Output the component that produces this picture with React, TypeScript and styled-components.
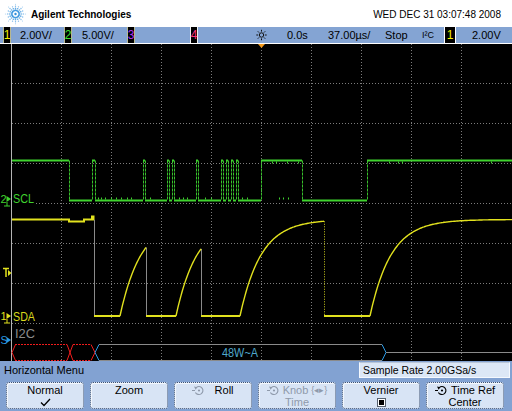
import React from 'react';
import styled, { createGlobalStyle } from 'styled-components';

/* ------------------------------- Global page ------------------------------ */
const GlobalStyle = createGlobalStyle`
  html, body {
    margin: 0;
    padding: 0;
    background: #fff;
  }
  body {
    font-family: "Liberation Sans", Arial, sans-serif;
  }
`;

/* ------------------------------ Scope geometry ----------------------------- */
const TOP = 44;
const BOTTOM = 361;
const LEFT = 11;
const V_GRID = [61, 111, 161, 211, 261, 311, 361, 411, 461];
const H_GRID = [83, 123, 163, 203, 243, 283, 323];

const SCL_HI = 160.5;
const SCL_LO = 200.5;
const SCL_EDGES = [
  69, 92, 95, 143, 145, 167, 169, 172, 174, 196, 198, 221, 223, 226, 228, 231,
  233, 236, 238, 261, 302, 367,
];
const SCL_BUMPS = [
  98, 101, 105, 111, 116, 121, 127, 131, 150, 179, 183, 187, 205, 211, 242, 247,
  279, 283, 288,
];

const SDA_HI = 219.5;
const SDA_LO = 316;

const squareWave = (edges: number[], start: number, end: number) => {
  let high = true;
  let x = start;
  let flats = '';
  let walls = '';
  edges.forEach((e) => {
    flats += `M${x} ${high ? SCL_HI : SCL_LO}H${e}`;
    walls += `M${e + 0.5} ${SCL_HI}V${SCL_LO}`;
    high = !high;
    x = e;
  });
  flats += `M${x} ${high ? SCL_HI : SCL_LO}H${end}`;
  return { flats, walls };
};

const rcY = (t: number, tau = 21) =>
  SDA_LO - (SDA_LO - SDA_HI) * (1 - Math.exp(-t / tau));

const ramp = (x0: number, x1: number) => {
  const pts: string[] = [];
  for (let x = x0; x <= x1; x += 1) {
    pts.push(`${x} ${rcY(x - x0).toFixed(1)}`);
  }
  return pts.join(' L');
};

const scl = squareWave(SCL_EDGES, 12, 512);

const sdaFlats = [
  `M12 ${SDA_HI}H69V221.5H84V${SDA_HI}H92V216.5H93.5V${SDA_HI}H94`,
  `M94 ${SDA_LO}H120`,
  `M146 ${SDA_LO}H176`,
  `M201 ${SDA_LO}H240`,
  `M324 ${SDA_LO}H370`,
].join(' ');

const sdaRamps = [
  `M120 ${SDA_LO} L${ramp(120, 146)}`,
  `M176 ${SDA_LO} L${ramp(176, 201)}`,
  `M240 ${SDA_LO} L${ramp(240, 324)}`,
  `M370 ${SDA_LO} L${ramp(370, 512)}`,
].join(' ');

/* --------------------------------- Layout --------------------------------- */
const Frame = styled.div`
  width: 512px;
  height: 411px;
  display: flex;
  flex-direction: column;
  overflow: hidden;
  background: #000;
  color: #000;
`;

const Header = styled.header`
  height: 27px;
  flex: none;
  background: #fff;
  display: flex;
  align-items: center;
  padding: 0 11px 0 4px;
`;

const Brand = styled.div`
  font-size: 10px;
  font-weight: 700;
  margin-left: 4px;
  margin-top: 1px;
`;

const Clock = styled.div`
  margin-left: auto;
  font-size: 10px;
  margin-top: 2px;
`;

const StatusBar = styled.div`
  height: 16px;
  flex: none;
  background: #84a4d3;
  border-bottom: 1px solid #fff;
  display: flex;
  font-size: 11px;
`;

const Slot = styled.div<{ $w: number; $pad?: number }>`
  width: ${(p) => p.$w}px;
  flex: none;
  padding-left: ${(p) => p.$pad ?? 0}px;
  box-sizing: border-box;
  display: flex;
  align-items: center;
  white-space: nowrap;
`;

const ChanBox = styled.div<{ $c: string; $w?: number; $edge?: string }>`
  width: ${(p) => p.$w ?? 8}px;
  flex: none;
  box-sizing: border-box;
  background: #000;
  color: ${(p) => p.$c};
  border-left: 1px solid ${(p) => p.$edge ?? '#b8b890'};
  border-right: 1px solid ${(p) => p.$edge ?? '#b8b890'};
  display: flex;
  align-items: center;
  justify-content: center;
  font-size: 12px;
`;

const Small = styled.span`
  font-size: 9px;
`;

const Display = styled.svg`
  display: block;
  flex: none;
  font-family: "Liberation Sans", Arial, sans-serif;
`;

const Menu = styled.div`
  height: 50px;
  flex: none;
  background: #82a2d2;
  display: flex;
  flex-direction: column;
`;

const MenuHead = styled.div`
  height: 17px;
  display: flex;
  justify-content: space-between;
  padding: 0 2px 0 4px;
`;

const MenuTitle = styled.div`
  font-size: 11px;
  line-height: 15px;
  padding-top: 2px;
`;

const RateBox = styled.div`
  width: 151px;
  height: 16px;
  margin-top: 1px;
  box-sizing: border-box;
  background: #dce7f6;
  border: 1px solid #f4f8fe;
  border-top-color: #b9c6d8;
  font-size: 10.5px;
  line-height: 14px;
  padding-left: 3px;
`;

const KeyRow = styled.div`
  display: flex;
  gap: 6px;
  padding: 4px 6px 0;
`;

const SoftKey = styled.div<{ $dim?: boolean }>`
  width: 78px;
  height: 27px;
  box-sizing: border-box;
  background: #d8e4f5;
  border: 1px dotted #3f5374;
  border-radius: 3px;
  box-shadow: inset 1px 1px 0 #f3f7fd;
  color: ${(p) => (p.$dim ? '#8f9aab' : '#000')};
  font-size: 11px;
  display: flex;
  flex-direction: column;
  padding-top: 1px;
`;

const KeyLine = styled.div`
  height: 12px;
  line-height: 12px;
  display: flex;
  align-items: center;
  justify-content: center;
  gap: 3px;
  white-space: nowrap;
`;

const CheckBox = styled.div`
  width: 9px;
  height: 9px;
  box-sizing: border-box;
  border: 1px solid #56606e;
  background: #000;
  box-shadow: inset 1px 1px 0 #fff, inset -1px -1px 0 #fff;
`;

/* ---------------------------------- Icons --------------------------------- */
const sparkDots = (() => {
  const dots: { x: number; y: number; r: number; o: number }[] = [];
  for (let i = 0; i < 16; i++) {
    const a = (i * Math.PI) / 8;
    const n = i % 4 === 0 ? 5 : i % 2 === 0 ? 4 : 3;
    for (let k = 1; k <= n; k++) {
      const d = 1.6 + k * 2.05;
      dots.push({
        x: 11.5 + Math.cos(a) * d,
        y: 11 + Math.sin(a) * d,
        r: Math.max(0.45, 1.15 - k * 0.16),
        o: 1 - k * 0.12,
      });
    }
  }
  return dots;
})();

const Spark = () => (
  <svg width="23" height="22" viewBox="0 0 23 22">
    {sparkDots.map((d, i) => (
      <circle key={i} cx={d.x} cy={d.y} r={d.r} fill="#2f8fdc" opacity={d.o} />
    ))}
    <circle cx="11.5" cy="11" r="1.2" fill="#2f8fdc" />
  </svg>
);

const Sun = () => (
  <svg width="11" height="12" viewBox="0 0 11 12">
    <circle cx="5.5" cy="6" r="2.2" fill="none" stroke="#111" strokeWidth="1" />
    {[0, 45, 90, 135, 180, 225, 270, 315].map((a) => {
      const r = (a * Math.PI) / 180;
      return (
        <line
          key={a}
          x1={5.5 + Math.cos(r) * 3.4}
          y1={6 + Math.sin(r) * 3.4}
          x2={5.5 + Math.cos(r) * 5.2}
          y2={6 + Math.sin(r) * 5.2}
          stroke="#111"
          strokeWidth="1"
        />
      );
    })}
  </svg>
);

const Knob = ({ color = '#000' }: { color?: string }) => (
  <svg width="13" height="11" viewBox="0 0 13 11">
    <path
      d="M4.2 2.6 A4 4 0 1 1 3.4 7.4"
      fill="none"
      stroke={color}
      strokeWidth="1.1"
    />
    <path d="M2 1.6 L5.4 2.2 L3.6 4.8 Z" fill={color} />
    <circle cx="7" cy="5.5" r="1.1" fill={color} />
    <line x1="0" y1="5.5" x2="3" y2="5.5" stroke={color} strokeWidth="1" />
  </svg>
);

const Check = () => (
  <svg width="11" height="9" viewBox="0 0 11 9">
    <path d="M1 4.5 L4 7.5 L10 1" fill="none" stroke="#000" strokeWidth="1.3" />
  </svg>
);

/* --------------------------------- Screen --------------------------------- */
const Marker = ({
  y,
  label,
  color,
  ground,
}: {
  y: number;
  label: string;
  color: string;
  ground?: boolean;
}) => (
  <g>
    <text x="0.5" y={y + 4} fontSize="11" fill={color}>
      {label}
    </text>
    <path d={`M6.5 ${y - 3}L11 ${y}L6.5 ${y + 3}Z`} fill={color} />
    {ground && (
      <path
        d={`M7 ${y + 3}V${y + 7}M4 ${y + 7}H10`}
        stroke={color}
        strokeWidth="1"
      />
    )}
  </g>
);

const Screen = () => (
  <Display width={512} height={BOTTOM - TOP} viewBox={`0 ${TOP} 512 ${BOTTOM - TOP}`}>
    <rect x="0" y={TOP} width="512" height={BOTTOM - TOP} fill="#000" />

    {/* graticule */}
    <g stroke="#7c7c7c" strokeWidth="1" strokeDasharray="1 2">
      {V_GRID.map((x) => (
        <line key={x} x1={x + 0.5} y1={TOP} x2={x + 0.5} y2={BOTTOM} />
      ))}
      {H_GRID.map((y) => (
        <line key={y} x1={LEFT + 1} y1={y + 0.5} x2={512} y2={y + 0.5} />
      ))}
    </g>
    <line x1={LEFT + 0.5} y1={TOP} x2={LEFT + 0.5} y2={BOTTOM} stroke="#b4b4b4" />

    {/* trigger position */}
    <path d="M258 44H265L261.5 48Z" fill="#f49a1c" />

    {/* channel 2: SCL */}
    <path d={scl.walls} stroke="#38c02c" strokeWidth="1" strokeDasharray="3 1" fill="none" />
    <path d={scl.flats} stroke="#3fd22e" strokeWidth="2" fill="none" />
    <g fill="#3fd22e">
      {SCL_BUMPS.map((x) => (
        <rect key={x} x={x} y={SCL_LO - 3} width="1" height="2" />
      ))}
      {[272, 276, 287, 298, 389, 398, 402, 491].map((x) => (
        <rect key={x} x={x} y={SCL_HI + 1} width="1" height="2" />
      ))}
    </g>

    {/* channel 1: SDA */}
    <path d={`M94.5 ${SDA_HI}V${SDA_LO}`} stroke="#8a8a8a" strokeWidth="1" />
    <path d={`M146.5 ${rcY(26)}V${SDA_LO}`} stroke="#8a8a8a" strokeWidth="1" />
    <path d={`M201.5 ${rcY(25)}V${SDA_LO}`} stroke="#8a8a8a" strokeWidth="1" />
    <path
      d={`M324.5 ${rcY(84)}V${SDA_LO}`}
      stroke="#c8c81c"
      strokeWidth="1"
      strokeDasharray="1 1.5"
    />
    <path d={sdaFlats} stroke="#e2e21e" strokeWidth="2" fill="none" />
    <path d={sdaRamps} stroke="#e2e21e" strokeWidth="1.4" fill="none" strokeLinejoin="round" />

    {/* serial bus decode */}
    <g stroke="#f01c1c" strokeWidth="1" fill="none">
      <path d="M15.5 344.5L12 352.5L15.5 360.5" />
      <path d="M15 344.5H67M15 360.5H67" strokeDasharray="2 1" />
      <path d="M67 344.5L73 360.5M73 344.5L67 360.5" />
      <path d="M73 344.5H91M73 360.5H91" strokeDasharray="2 1" />
      <path d="M91 344.5L95 352.5L91 360.5" />
    </g>
    <path d="M99 344.5L95 352.5L99 360.5" stroke="#2a9ae6" fill="none" />
    <path d="M99 344.5H382M99 360.5H382" stroke="#8a8a8a" />
    <path d="M382 344.5L386 352.5L382 360.5" stroke="#2a9ae6" fill="none" />
    <path d="M386 352.5H512" stroke="#8a8a8a" />
    <text x="222" y="357" fontSize="12" fill="#4fa8cc" textLength="36" lengthAdjust="spacingAndGlyphs">
      48W~A
    </text>

    {/* labels */}
    <rect x="12" y="192" width="24" height="12" fill="#000" />
    <text x="13" y="203" fontSize="13" fill="#3fd22e" textLength="21" lengthAdjust="spacingAndGlyphs">
      SCL
    </text>
    <rect x="12" y="309" width="25" height="13" fill="#000" />
    <text x="13" y="321" fontSize="13" fill="#d8d81c" textLength="22" lengthAdjust="spacingAndGlyphs">
      SDA
    </text>
    <text x="15" y="338" fontSize="12" fill="#8c8c8c" textLength="20" lengthAdjust="spacingAndGlyphs">
      I2C
    </text>

    <Marker y={199} label="2" color="#3fd22e" ground />
    <Marker y={316} label="1" color="#e2e21e" ground />
    <Marker y={340} label="S" color="#2a9ae6" />
    <g>
      <path d="M3 268.5H9M6 268.5V277" stroke="#e2e21e" strokeWidth="1.5" />
      <path d="M8 270L11.5 273L8 276Z" fill="#e2e21e" />
    </g>
  </Display>
);

/* ----------------------------------- App ---------------------------------- */
const App = () => {
  return (
    <>
      <GlobalStyle />
      <Frame>
        <Header>
          <Spark />
          <Brand>Agilent Technologies</Brand>
          <Clock>WED DEC 31 03:07:48 2008</Clock>
        </Header>

        <StatusBar>
          <Slot $w={3} />
          <ChanBox $c="#f2f200">1</ChanBox>
          <Slot $w={53} $pad={9}>2.00V/</Slot>
          <ChanBox $c="#3fe02e">2</ChanBox>
          <Slot $w={55} $pad={10}>5.00V/</Slot>
          <ChanBox $c="#b030f0">3</ChanBox>
          <Slot $w={55} />
          <ChanBox $c="#ff3078" $edge="#f0f0f0">4</ChanBox>
          <Slot $w={58} />
          <Slot $w={31}>
            <Sun />
          </Slot>
          <Slot $w={41}>0.0s</Slot>
          <Slot $w={57}>37.00µs/</Slot>
          <Slot $w={37}>Stop</Slot>
          <Slot $w={22}>
            <Small>I²C</Small>
          </Slot>
          <ChanBox $c="#f2f200" $w={12} $edge="#fff">1</ChanBox>
          <Slot $w={56} $pad={16}>2.00V</Slot>
        </StatusBar>

        <Screen />

        <Menu>
          <MenuHead>
            <MenuTitle>Horizontal Menu</MenuTitle>
            <RateBox>Sample Rate 2.00GSa/s</RateBox>
          </MenuHead>
          <KeyRow>
            <SoftKey>
              <KeyLine>Normal</KeyLine>
              <KeyLine>
                <Check />
              </KeyLine>
            </SoftKey>
            <SoftKey>
              <KeyLine>Zoom</KeyLine>
            </SoftKey>
            <SoftKey>
              <KeyLine>
                <Knob color="#8f9aab" />
                <span>&nbsp;&nbsp;Roll</span>
              </KeyLine>
            </SoftKey>
            <SoftKey $dim>
              <KeyLine>
                <Knob color="#8f9aab" />
                Knob <Small>{'{◂▸}'}</Small>
              </KeyLine>
              <KeyLine>Time</KeyLine>
            </SoftKey>
            <SoftKey>
              <KeyLine>Vernier</KeyLine>
              <KeyLine>
                <CheckBox />
              </KeyLine>
            </SoftKey>
            <SoftKey>
              <KeyLine>
                <Knob />
                Time Ref
              </KeyLine>
              <KeyLine>Center</KeyLine>
            </SoftKey>
          </KeyRow>
        </Menu>
      </Frame>
    </>
  );
};

export default App;
